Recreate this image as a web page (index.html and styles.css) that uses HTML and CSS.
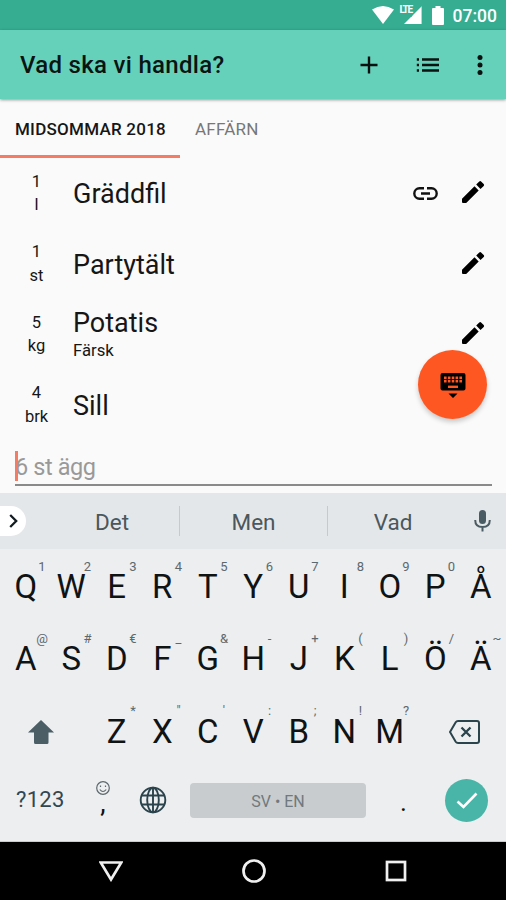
FILE: index.html
```html
<!DOCTYPE html>
<html lang="sv">
<head>
<meta charset="utf-8">
<title>Vad ska vi handla?</title>
<link rel="stylesheet" href="styles.css">
</head>
<body>
<svg width="0" height="0" class="defs">
  <symbol id="pencil" viewBox="0 0 24 24"><path d="M1 22V18.800L13.500 6.300L17.700 10.500L5.200 23H2Q1 23 1 22zM15.200 4.600L18.300 1.500Q19.200 .600 20.100 1.500L22.700 4.100Q23.600 5 22.700 5.900L19.500 9z"/></symbol>
</svg>
<header class="status">
  <svg class="wifi" width="22" height="18" viewBox="0 0 22 18"><path d="M0 3.500Q11-3.500 22 3.500L11 18z"/></svg>
  <div class="cell"><span class="lte">LTE</span><svg width="18" height="18" viewBox="0 0 18 18"><path d="M18 0V18H0z"/></svg></div>
  <svg class="battery" width="12" height="19" viewBox="0 0 12 19"><path d="M3.500 0h5v2H11q1 0 1 1V18q0 1-1 1H1q-1 0-1-1V3q0-1 1-1h2.500z"/></svg>
  <span class="clock">07:00</span>
</header>
<div class="appbar">
  <h1>Vad ska vi handla?</h1>
  <svg class="add" width="18" height="18" viewBox="0 0 18 18"><path d="M9 .500V17.500M.500 9H17.500"/></svg>
  <svg class="lines" width="24" height="14" viewBox="0 0 24 14"><path d="M6 1.500H23M6 7H23M6 12.500H23M.800 1.500H3M.800 7H3M.800 12.500H3"/></svg>
  <svg class="more" width="6" height="20" viewBox="0 0 6 20"><circle cx="3" cy="2.500" r="2.500"/><circle cx="3" cy="10" r="2.500"/><circle cx="3" cy="17.500" r="2.500"/></svg>
</div>
<nav class="tabs">
  <div class="tab active">MIDSOMMAR 2018</div>
  <div class="tab">AFFÄRN</div>
</nav>
<main class="list">
  <div class="row">
    <div class="qty"><span>1</span><span>l</span></div>
    <div class="item"><span class="name">Gräddfil</span></div>
    <svg class="link" width="25" height="13" viewBox="0 0 25 13"><path d="M11 1.300H6.500A5.200 5.200 0 0 0 6.500 11.700H11M14 1.300H18.500A5.200 5.200 0 0 1 18.500 11.700H14M8 6.500H17"/></svg>
    <svg class="edit"><use href="#pencil"/></svg>
  </div>
  <div class="row">
    <div class="qty"><span>1</span><span>st</span></div>
    <div class="item"><span class="name">Partytält</span></div>
    <svg class="edit"><use href="#pencil"/></svg>
  </div>
  <div class="row">
    <div class="qty"><span>5</span><span>kg</span></div>
    <div class="item"><span class="name">Potatis</span><span class="note">Färsk</span></div>
    <svg class="edit"><use href="#pencil"/></svg>
  </div>
  <div class="row">
    <div class="qty"><span>4</span><span>brk</span></div>
    <div class="item"><span class="name">Sill</span></div>
  </div>
  <div class="fab">
    <svg width="26" height="26" viewBox="0 0 26 26"><path d="M2.500 0h21Q25.500 0 25.500 2V15.500Q25.500 17.500 23.500 17.500H2.500Q.500 17.500 .500 15.500V2Q.500 0 2.500 0zM8.500 20.500h9L13 25z"/><path class="keys" d="M4 4.800H22M4 8.300H22"/><path class="spacebar" d="M8 13.800H18"/></svg>
  </div>
</main>
<div class="entry"><i class="caret"></i><span>6 st ägg</span></div>
<section class="suggest">
  <div class="expand"><svg width="9" height="14" viewBox="0 0 9 14"><path d="M1.200 1L7.200 7L1.200 13"/></svg></div>
  <div class="word first">Det</div>
  <div class="word">Men</div>
  <div class="word last">Vad</div>
  <svg class="mic" width="17" height="22" viewBox="0 0 17 22"><rect x="5" y="0" width="7" height="14" rx="3.500"/><path d="M1.200 10Q1.200 17 8.500 17T15.800 10M8.500 17V21.500"/></svg>
</section>
<section class="keyboard">
  <div class="keys-row">
    <div class="key">Q<sup>1</sup></div><div class="key">W<sup>2</sup></div><div class="key">E<sup>3</sup></div><div class="key">R<sup>4</sup></div><div class="key">T<sup>5</sup></div><div class="key">Y<sup>6</sup></div><div class="key">U<sup>7</sup></div><div class="key">I<sup>8</sup></div><div class="key">O<sup>9</sup></div><div class="key">P<sup>0</sup></div><div class="key">Å</div>
  </div>
  <div class="keys-row">
    <div class="key">A<sup>@</sup></div><div class="key">S<sup>#</sup></div><div class="key">D<sup>€</sup></div><div class="key">F<sup>_</sup></div><div class="key">G<sup>&amp;</sup></div><div class="key">H<sup>-</sup></div><div class="key">J<sup>+</sup></div><div class="key">K<sup>(</sup></div><div class="key">L<sup>)</sup></div><div class="key">Ö<sup>/</sup></div><div class="key">Ä<sup>~</sup></div>
  </div>
  <div class="keys-row">
    <div class="wide shift"><svg width="26" height="24" viewBox="0 0 26 24"><path d="M13 0L26 12.500H20.500V22.500Q20.500 24 19 24H7.500Q6 24 6 22.500V12.500H0z"/></svg></div>
    <div class="key">Z<sup>*</sup></div><div class="key">X<sup>"</sup></div><div class="key">C<sup>'</sup></div><div class="key">V<sup>:</sup></div><div class="key">B<sup>;</sup></div><div class="key">N<sup>!</sup></div><div class="key">M<sup>?</sup></div>
    <div class="wide back"><svg width="31" height="24" viewBox="0 0 31 24"><path d="M9 1H28Q30 1 30 3V21Q30 23 28 23H9Q7.500 23 6.700 21.800L1 12L6.700 2.200Q7.500 1 9 1z"/><path class="cross" d="M12.500 7.500L21.500 16.500M21.500 7.500L12.500 16.500"/></svg></div>
  </div>
  <div class="bottom-row">
    <div class="sym">?123</div>
    <div class="comma"><svg width="14" height="14" viewBox="0 0 14 14"><circle cx="7" cy="7" r="6.300"/><path d="M4.500 4.500V6M9.500 4.500V6M3.800 8.500Q7 12.500 10.200 8.500"/></svg><span>,</span></div>
    <svg class="globe" width="28" height="28" viewBox="0 0 28 28"><circle cx="14" cy="14" r="12.300"/><ellipse cx="14" cy="14" rx="5.800" ry="12.300"/><path d="M14 1.700V26.300M2.500 9.500H25.500M2.500 18.500H25.500"/></svg>
    <div class="space">SV • EN</div>
    <div class="period">.</div>
    <div class="done"><svg width="22" height="17" viewBox="0 0 22 17"><path d="M1.500 9.500L7.500 15L20.500 1.500"/></svg></div>
  </div>
</section>
<footer class="navbar">
  <svg width="24" height="22" viewBox="0 0 24 22"><path d="M1.700 2.500H22.300L12 19.500z"/></svg>
  <svg width="24" height="24" viewBox="0 0 24 24"><circle cx="12" cy="12" r="10.500"/></svg>
  <svg width="22" height="22" viewBox="0 0 22 22"><rect x="2" y="2" width="18" height="18"/></svg>
</footer>
</body>
</html>
```

FILE: styles.css
```css
* { box-sizing: border-box; }
body { margin: 0; width: 506px; height: 900px; overflow: hidden; background: #fafafa; color: #161616; font-family: Roboto, "Liberation Sans", sans-serif; }
svg { display: block; flex: none; }
.defs { position: absolute; }

.status { height: 30px; background: #36ad91; color: #fff; display: flex; align-items: flex-start; justify-content: flex-end; padding: 6px 9px 0 0; }
.status svg { fill: #fff; }
.cell { position: relative; margin: 0 10px 0 10px; }
.lte { position: absolute; left: -4px; top: -1px; font: 700 10px/10px "Roboto", sans-serif; letter-spacing: -1.300px; }
.cell svg { clip-path: polygon(72% 0, 100% 0, 100% 100%, 0 100%, 0 60%, 45% 60%); }
.battery { margin-right: 9px; }
.clock { font-size: 17.500px; font-weight: 500; line-height: 20px; }

.appbar { height: 69px; background: #66d1ba; box-shadow: 0 1px 3px rgba(0,0,0,.4); display: flex; align-items: center; padding: 0 23px 0 20px; position: relative; }
.appbar h1 { margin: 1px auto 0 0; font-size: 24px; font-weight: 500; line-height: 28px; letter-spacing: .3px; color: #0a1512; }
.appbar path { stroke: #07110f; stroke-width: 2.400; fill: none; }
.add { margin-right: 38px; }
.lines { margin-right: 37px; }
.more { fill: #07110f; }

.tabs { height: 59px; display: flex; }
.tab { padding: 0 15px; line-height: 60px; font-size: 17px; font-weight: 400; letter-spacing: .25px; color: #777; border-bottom: 3px solid transparent; }
.tab.active { width: 180px; font-weight: 500; color: #161616; border-color: #f47c64; white-space: nowrap; }

.list { height: 282px; position: relative; }
.row { height: 70.500px; display: flex; align-items: center; padding-right: 21px; }
.qty { width: 73px; display: flex; flex-direction: column; align-items: center; font-size: 16.500px; line-height: 23.500px; }
.item { flex: 1; display: flex; flex-direction: column; padding-top: 2px; }
.name { font-size: 27px; line-height: 32px; }
.note { font-size: 16.700px; line-height: 24px; }
.link { margin-right: 23px; }
.link path { fill: none; stroke: #111; stroke-width: 2.400; }
.edit { width: 24px; height: 24px; margin-top: -2px; }
.fab { position: absolute; left: 418px; top: 192px; width: 69px; height: 69px; border-radius: 50%; background: #ff5722; box-shadow: 0 3px 5px rgba(0,0,0,.2); display: flex; justify-content: center; padding-top: 23px; }
.fab .keys { stroke: #ff5722; stroke-width: 2.600; stroke-dasharray: 2.600 1.250; }
.fab .spacebar { stroke: #ff5722; stroke-width: 2.400; }

.entry { height: 46px; margin: 0 14px 7px 15px; border-bottom: 2px solid #8a8a8a; display: flex; align-items: center; font-size: 23.500px; letter-spacing: -.4px; color: #999; position: relative; padding-top: 10px; }
.caret { position: absolute; left: 0; top: 11px; width: 3px; height: 30px; background: #f47c64; }

.suggest { height: 56px; background: #e4e7e9; display: flex; align-items: center; color: #4b575c; font-size: 22.500px; padding-right: 15px; }
.expand { width: 26px; height: 30px; background: #fff; border-radius: 0 15px 15px 0; display: flex; align-items: center; padding-left: 9px; }
.expand path { fill: none; stroke: #111b20; stroke-width: 2.300; }
.word { width: 148px; height: 30px; line-height: 33px; text-align: center; border-right: 1px solid #c5cacc; }
.word.first { width: 154px; padding-left: 19px; }
.word.last { width: 130px; border: 0; }
.mic { margin-left: auto; fill: #4b5b63; }
.mic path { fill: none; stroke: #4b5b63; stroke-width: 2; }

.keyboard { height: 293px; background: #eceef0; padding: 0 3px; border-bottom: 1px solid #c9cbcc; color: #101314; }
.keys-row { height: 72.300px; display: grid; grid-template-columns: repeat(11, 45.500px); }
.key { position: relative; text-align: center; font-size: 33px; line-height: 76px; }
.key sup { position: absolute; left: 28px; width: 22px; top: 9.500px; font-size: 13px; line-height: 16px; color: #5c686d; }
.wide { grid-column: span 2; display: flex; align-items: center; }
.shift { padding-left: 25px; fill: #4b5e66; }
.back { padding-left: 36px; }
.back path { fill: none; stroke: #2b434c; stroke-width: 2; }
.back .cross { stroke-width: 2.300; }
.bottom-row { height: 69px; display: flex; align-items: center; }
.sym { width: 90px; padding-left: 13px; font-size: 22px; letter-spacing: .3px; line-height: 28px; color: #33464e; }
.comma { width: 20px; display: flex; flex-direction: column; align-items: center; height: 38px; font-size: 27px; line-height: 16px; }
.comma svg { fill: none; stroke: #5d686c; stroke-width: 1.200; }
.globe { margin: 0 23px 0 26px; fill: none; stroke: #2b434c; stroke-width: 1.900; }
.space { width: 176px; height: 35px; border-radius: 4px; background: #c8ccce; text-align: center; line-height: 37px; font-size: 16px; color: #70797d; }
.period { width: 75px; text-align: center; font-size: 26px; line-height: 40px; padding-top: 4px; }
.done { width: 43px; height: 43px; margin-left: 4px; border-radius: 50%; background: #48b5a8; display: flex; align-items: center; justify-content: center; }
.done path { fill: none; stroke: #fff; stroke-width: 2.600; }

.navbar { height: 58px; background: #000; display: flex; align-items: center; padding-left: 99px; }
.navbar svg { fill: none; stroke: #f0f0f0; stroke-width: 2.700; margin-right: 119px; }
```
